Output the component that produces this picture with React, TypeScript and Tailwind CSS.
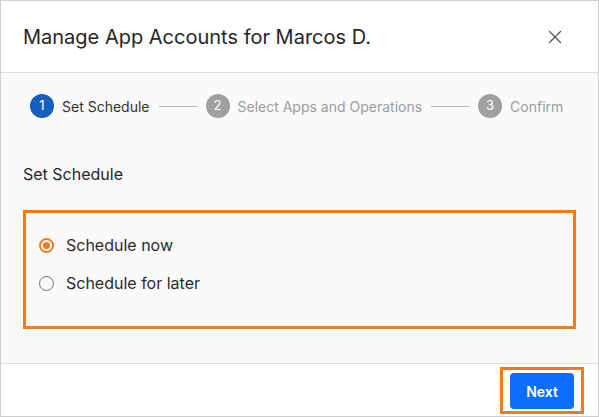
import { X } from "lucide-react";

const STEPS = [
  { n: 1, label: "Set Schedule", active: true },
  { n: 2, label: "Select Apps and Operations", active: false },
  { n: 3, label: "Confirm", active: false },
];

function Radio({ checked, label }: { checked: boolean; label: string }) {
  return (
    <label className="flex items-center h-6 gap-[12px]">
      {checked ? (
        <span className="w-[15px] h-[15px] rounded-full border-2 border-[#f47a20] flex items-center justify-center">
          <span className="w-[7px] h-[7px] rounded-full bg-[#f47a20]" />
        </span>
      ) : (
        <span className="w-[15px] h-[15px] rounded-full border-[1.5px] border-[#707070]" />
      )}
      <span className="text-[16px] text-[#2b2b2b]">{label}</span>
    </label>
  );
}

export default function App() {
  return (
    <div className="w-[599px] h-[417px] border border-[#cfcfcf] bg-white flex flex-col font-['Inter',sans-serif]">
      {/* Header */}
      <div className="h-[72px] shrink-0 border-b border-[#dedede] flex items-center justify-between pl-[22px] pr-[32px]">
        <h1 className="text-[20px] text-[#262626]">Manage App Accounts for Marcos D.</h1>
        <X size={22} strokeWidth={1.4} className="text-[#555]" />
      </div>

      {/* Body */}
      <div className="h-[291px] shrink-0 bg-[#fafafa] border-b border-[#dedede] pt-[21px] px-[22px]">
        <div className="flex items-center h-6 pl-[7px]">
          {STEPS.map((s, i) => (
            <div key={s.n} className="flex items-center">
              <span
                className={
                  "w-6 h-6 rounded-full flex items-center justify-center text-[13px] text-white " +
                  (s.active ? "bg-[#1560bd]" : "bg-[#a0a0a0]")
                }
              >
                {s.n}
              </span>
              <span className={"ml-[8px] text-[14px] " + (s.active ? "text-[#333]" : "text-[#9c9c9c]")}>
                {s.label}
              </span>
              {i < STEPS.length - 1 && <span className="mx-[9px] w-[38px] h-px bg-[#b5b5b5]" />}
            </div>
          ))}
        </div>

        <div className="mt-[44px] text-[16px] leading-6 text-[#262626]">Set Schedule</div>

        <div className="mt-[24px] w-[553px] h-[119px] border-[3px] border-[#f47a20] pt-[20px] pl-[13px] flex flex-col gap-[14px]">
          <Radio checked label="Schedule now" />
          <Radio checked={false} label="Schedule for later" />
        </div>
      </div>

      {/* Footer */}
      <div className="flex-1 flex justify-end items-start pt-[3px] pr-[14px]">
        <div className="w-[84px] h-[47px] border-[3px] border-[#f47a20] pl-[7px] pt-[3px]">
          <button className="w-16 h-9 rounded-[4px] bg-[#0d6efd] text-white text-[14px] font-semibold">Next</button>
        </div>
      </div>
    </div>
  );
}
